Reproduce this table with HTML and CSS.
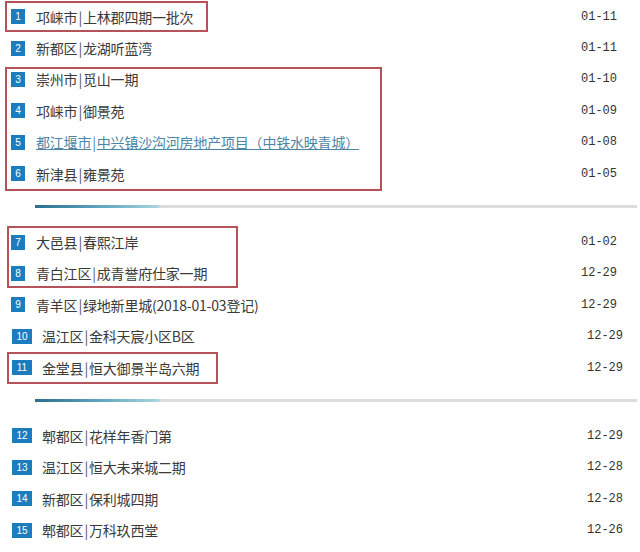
FILE: index.html
```html
<!DOCTYPE html>
<html lang="zh-CN">
  <head>
    <meta charset="UTF-8" />
    <meta name="viewport" content="width=device-width, initial-scale=1.0" />
    <title>成都楼盘登记</title>
    <link rel="stylesheet" href="styles.css">
  </head>
  <body>
    <div class="lista">
      <div class="grupo grupo-a">
        <div class="linha"><span class="num">1</span><span class="nome">邛崃市<i class="sep">|</i>上林郡四期一批次</span><span class="data">01-11</span></div>
      </div>
      <div class="linha"><span class="num">2</span><span class="nome">新都区<i class="sep">|</i>龙湖听蓝湾</span><span class="data">01-11</span></div>
      <div class="grupo grupo-b">
        <div class="linha"><span class="num">3</span><span class="nome">崇州市<i class="sep">|</i>觅山一期</span><span class="data">01-10</span></div>
        <div class="linha"><span class="num">4</span><span class="nome">邛崃市<i class="sep">|</i>御景苑</span><span class="data">01-09</span></div>
        <div class="linha"><span class="num">5</span><a class="nome link" href="#">都江堰市<i class="sep">|</i>中兴镇沙沟河房地产项目（中铁水映青城）</a><span class="data">01-08</span></div>
        <div class="linha"><span class="num">6</span><span class="nome">新津县<i class="sep">|</i>雍景苑</span><span class="data">01-05</span></div>
      </div>

      <div class="divisor"></div>

      <div class="grupo grupo-c">
        <div class="linha"><span class="num">7</span><span class="nome">大邑县<i class="sep">|</i>春熙江岸</span><span class="data">01-02</span></div>
        <div class="linha"><span class="num">8</span><span class="nome">青白江区<i class="sep">|</i>成青誉府仕家一期</span><span class="data">12-29</span></div>
      </div>
      <div class="linha"><span class="num">9</span><span class="nome">青羊区<i class="sep">|</i>绿地新里城(2018-01-03登记)</span><span class="data">12-29</span></div>
      <div class="linha largo"><span class="num">10</span><span class="nome">温江区<i class="sep">|</i>金科天宸小区B区</span><span class="data">12-29</span></div>
      <div class="grupo grupo-d">
        <div class="linha largo"><span class="num">11</span><span class="nome">金堂县<i class="sep">|</i>恒大御景半岛六期</span><span class="data">12-29</span></div>
      </div>

      <div class="divisor"></div>

      <div class="linha largo"><span class="num">12</span><span class="nome">郫都区<i class="sep">|</i>花样年香门第</span><span class="data">12-29</span></div>
      <div class="linha largo"><span class="num">13</span><span class="nome">温江区<i class="sep">|</i>恒大未来城二期</span><span class="data">12-28</span></div>
      <div class="linha largo"><span class="num">14</span><span class="nome">新都区<i class="sep">|</i>保利城四期</span><span class="data">12-28</span></div>
      <div class="linha largo"><span class="num">15</span><span class="nome">郫都区<i class="sep">|</i>万科玖西堂</span><span class="data">12-26</span></div>
    </div>
  </body>
</html>
```

FILE: styles.css
```css
body {
  margin: 0;
  padding: 0;
  background-color: #fff;
  font-family: "Noto Sans CJK SC", "Noto Sans", sans-serif;
  color: #3a3a3a;
}
.lista {
  width: 640px;
  padding-top: 1px;
  display: flex;
  flex-direction: column;
}
.linha {
  height: 31.4px;
  display: flex;
  align-items: center;
  padding-right: 23px;
  font-size: 14px;
}
.num {
  width: 14px;
  height: 15px;
  margin: 0 11px;
  background-color: #1b7dbd;
  color: #fff;
  font-family: "Liberation Sans", sans-serif;
  font-size: 10px;
  line-height: 15px;
  text-align: center;
}
.largo {
  padding-right: 17px;
}
.largo .num {
  width: 20px;
  margin: 0 10px 0 12px;
}
.nome {
  flex: 1;
  white-space: nowrap;
  letter-spacing: -0.2px;
}
.sep {
  font-style: normal;
  margin: 0 1px;
  color: #555;
}
.link {
  flex: none;
  color: #4b86a6;
  text-decoration: underline;
}
.link .sep {
  color: #4b86a6;
}
.link + .data {
  margin-left: auto;
}
.data {
  font-family: "Liberation Mono", monospace;
  font-size: 12px;
  color: #333;
}
.divisor {
  height: 3px;
  margin: 16px 3px 18px 35px;
  background: linear-gradient(to right, #2b6f8c 0, #5aa1bb 60px, #a9d3df 122px, #dcdcdc 126px, #dcdcdc 100%);
}
.grupo {
  position: relative;
}
.grupo::after {
  content: "";
  position: absolute;
  box-sizing: border-box;
  border: 2px solid #b5525a;
  pointer-events: none;
}
.grupo-a::after {
  left: 5px;
  top: 0;
  width: 203px;
  height: 31px;
}
.grupo-b::after {
  left: 5px;
  top: 3px;
  width: 377px;
  height: 124px;
}
.grupo-c::after {
  left: 7px;
  top: 0;
  width: 231px;
  height: 62px;
}
.grupo-d::after {
  left: 7px;
  top: 0;
  width: 211px;
  height: 32px;
}
```
